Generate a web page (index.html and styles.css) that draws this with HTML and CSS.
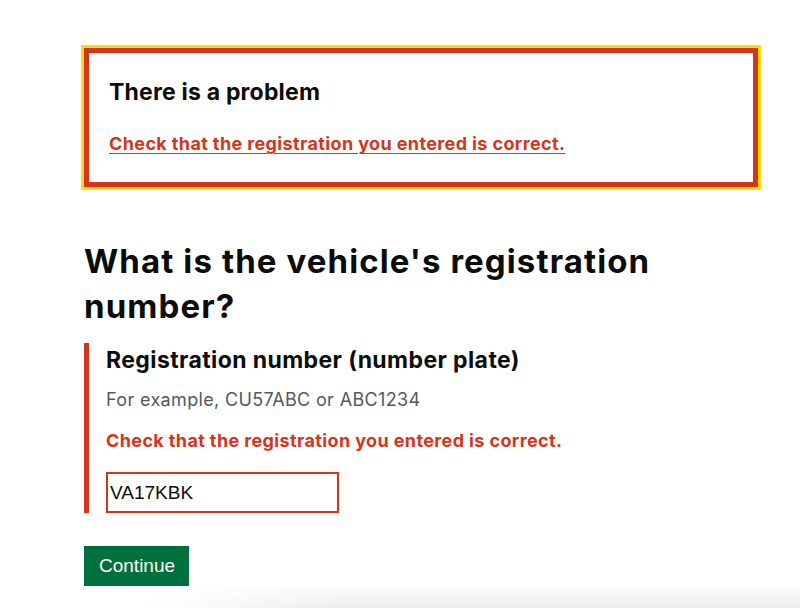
FILE: index.html
```html
<!DOCTYPE html>
<html lang="en">
<head>
<meta charset="utf-8">
<title>What is the vehicle's registration number?</title>
<link rel="stylesheet" href="styles.css">
</head>
<body>
<main class="page">
  <div class="error-summary" role="alert" tabindex="-1">
    <h2 class="error-summary__title">There is a problem</h2>
    <ul class="error-summary__list">
      <li><a href="#reg" class="error-summary__link">Check that the registration you entered is correct.</a></li>
    </ul>
  </div>

  <h1 class="heading">What is the vehicle's registration number?</h1>

  <div class="form-group form-group--error">
    <label class="label" for="reg">Registration number (number plate)</label>
    <div class="hint">For example, CU57ABC or ABC1234</div>
    <p class="error-message">Check that the registration you entered is correct.</p>
    <input class="input input--error" id="reg" type="text" value="VA17KBK">
  </div>

  <button class="button" type="submit">Continue</button>
</main>
<div class="window-shadow"></div>
</body>
</html>
```

FILE: styles.css
```css
html, body {
  margin: 0;
  padding: 0;
  background: #ffffff;
}

body {
  font-family: Inter, Roboto, "Liberation Sans", Arial, sans-serif;
  color: #0b0c0c;
  overflow: hidden;
}

.page {
  width: 674px;
  margin-left: 84px;
  padding-top: 48px;
}

.error-summary {
  border: 5px solid #d4351c;
  outline: 3px solid #ffdd00;
  padding: 24px 20px 0 20px;
  box-sizing: border-box;
  height: 139px;
}

.error-summary__title {
  margin: 0;
  font-size: 23px;
  line-height: 30px;
  font-weight: 700;
  letter-spacing: 0.2px;
}

.error-summary__list {
  list-style: none;
  margin: 24px 0 0 0;
  padding: 0;
}

.error-summary__link {
  font-size: 18px;
  line-height: 25px;
  font-weight: 700;
  letter-spacing: 0.38px;
  color: #d4351c;
  text-decoration: underline;
  text-decoration-thickness: 1px;
  text-underline-offset: 3px;
}

.heading {
  margin: 52px 0 0 0;
  font-size: 33px;
  line-height: 45px;
  font-weight: 700;
  letter-spacing: 1.1px;
  width: 620px;
}

.form-group {
  margin-top: 14px;
  padding-left: 17px;
  border-left: 5px solid #d4351c;
  display: flex;
  flex-direction: column;
  align-items: flex-start;
}

.label {
  display: block;
  margin-top: 2px;
  font-size: 23px;
  line-height: 30px;
  font-weight: 700;
  letter-spacing: 0.4px;
}

.hint {
  margin-top: 12px;
  font-size: 18px;
  line-height: 25px;
  letter-spacing: 0.35px;
  color: #505a5f;
}

.error-message {
  margin: 16px 0 0 0;
  font-size: 18px;
  line-height: 25px;
  font-weight: 700;
  letter-spacing: 0.38px;
  color: #d4351c;
}

.input {
  margin-top: 19px;
  width: 233px;
  height: 41px;
  box-sizing: border-box;
  border: 2px solid #0b0c0c;
  padding: 0 4px 0 2px;
  font-family: "Liberation Sans", Arial, sans-serif;
  font-size: 19px;
  color: #0b0c0c;
  background: #ffffff;
  border-radius: 0;
  outline: none;
}

.input--error {
  border-color: #d4351c;
}

.button {
  display: block;
  margin-top: 33px;
  height: 40px;
  padding: 0 14px 0 15px;
  border: 0;
  border-radius: 0;
  background: #00703c;
  box-shadow: 0 2px 0 #002d18;
  color: #ffffff;
  font-family: "Liberation Sans", Arial, sans-serif;
  font-size: 19px;
  line-height: 40px;
  cursor: pointer;
}

.window-shadow {
  position: fixed;
  left: 0;
  right: 0;
  bottom: 0;
  height: 26px;
  background: linear-gradient(to bottom, rgba(0, 0, 0, 0), rgba(0, 0, 0, 0.08));
  -webkit-mask-image: linear-gradient(to right, transparent 18%, #000 45%);
  mask-image: linear-gradient(to right, transparent 18%, #000 45%);
  pointer-events: none;
}
```
